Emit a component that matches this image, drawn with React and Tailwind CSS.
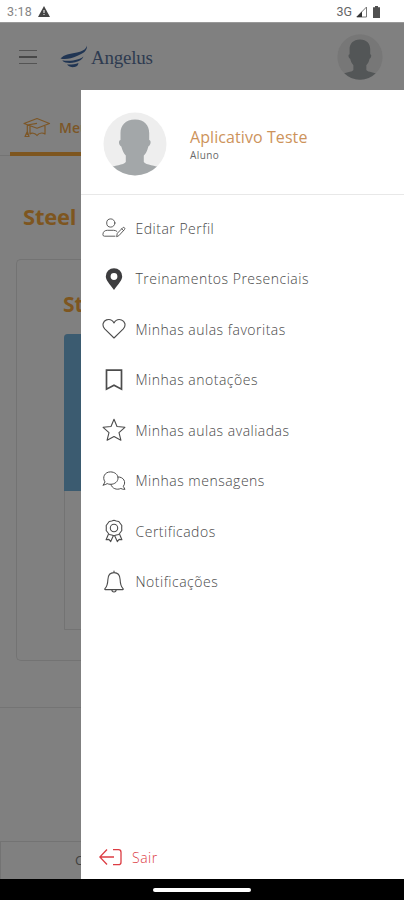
function Person({ className, bg, fg }) {
  return (
    <svg className={className} viewBox="0 0 64 64">
      <defs>
        <clipPath id="disc">
          <circle cx="32" cy="32" r="31.5" />
        </clipPath>
      </defs>
      <circle cx="32" cy="32" r="31.5" fill={bg} />
      <path
        clipPath="url(#disc)"
        fill={fg}
        d="M32 7.500c-9.500 0-14.500 6-14.500 13.500v7c-2.200.3-2 5 .8 6.500C19.500 39 21 41.500 22.800 43.500V50c-2 3.500-12 2.500-17 7v9h52v-9c-5-4.500-15-3.500-17-7v-6.500c2-2 3.500-4.500 4.500-9 2.800-1.500 3-6.200.9-6.500v-7C46.200 13.500 41.500 7.500 32 7.500z"
      />
    </svg>
  );
}

function Line({ children, width = 1.1 }) {
  return (
    <svg
      className="h-6 w-6 shrink-0"
      viewBox="0 0 24 24"
      fill="none"
      stroke="#4c4c4c"
      strokeWidth={width}
      strokeLinecap="round"
      strokeLinejoin="round"
    >
      {children}
    </svg>
  );
}

const items = [
  {
    label: "Editar Perfil",
    icon: (
      <Line width={0.9}>
        <circle cx="8.800" cy="7" r="4.100" />
        <path d="M13 20.200H2.500Q.8 20.200.9 18.500C1 15.500 3 14.300 5.500 14.300h6c1.500 0 2.500.4 3.300 1" />
        <path d="m14.700 20.300.6-3 5.500-5.600q.9-.7 1.700.1t0 1.700l-5.400 5.900zM19.700 12.800l1.700 1.700" />
      </Line>
    ),
  },
  {
    label: "Treinamentos Presenciais",
    icon: (
      <Line>
        <path
          fill="#3d3d3f"
          stroke="none"
          fillRule="evenodd"
          d="M12 1.200a8.200 8.200 0 0 0-8.200 8.200c0 3.600 3.700 7.300 8.200 13.600 4.500-6.300 8.200-10 8.200-13.600A8.200 8.200 0 0 0 12 1.200zm0 4.900a3.400 3.400 0 1 1 0 6.800 3.400 3.400 0 0 1 0-6.800z"
        />
      </Line>
    ),
  },
  {
    label: "Minhas aulas favoritas",
    icon: (
      <Line>
        <path d="M12 21 2.700 11.900C-.4 8.500 1.100 3.900 4.500 2.900 7.700 1.900 10.500 3.300 12 6c1.500-2.700 4.300-4.100 7.500-3.100 3.400 1 4.900 5.600 1.800 9z" />
      </Line>
    ),
  },
  {
    label: "Minhas anotações",
    icon: (
      <Line width={1.7}>
        <path strokeLinejoin="miter" d="M4.500 2.200h15v19L12 17.300l-7.500 3.900z" />
      </Line>
    ),
  },
  {
    label: "Minhas aulas avaliadas",
    icon: (
      <Line>
        <path d="m12 1.300 3 7.200 7.900.8-5.900 5.300 1.900 7.600-6.900-3.700-6.900 3.700L7 14.600 1.100 9.300 9 8.500z" />
      </Line>
    ),
  },
  {
    label: "Minhas mensagens",
    icon: (
      <Line width={1}>
        <path d="M1.300 16 3 12.900C-.1 8.300 2.800 2.900 8.400 2.900c4.400 0 7.600 2.700 7.600 6.200s-3.200 6.200-7.500 6.200c-1.400 0-2.300-.2-3.300-.7-1.200.9-2.600 1.400-3.900 1.400z" />
        <path d="M16 8c5.600-.4 8.500 5.200 5.300 9.300l1.700 3c-1.800.1-3-.2-4.200-.8-4 1.700-8.700.3-10-4.200" />
      </Line>
    ),
  },
  {
    label: "Certificados",
    icon: (
      <Line width={1.1}>
        <path d="m12 1.200 2.300.8 2.500.5 1.500 2 1.500 2-.1 2.500.1 2.500-1.500 2-1.500 2-2.500.5-2.300.8-2.300-.8-2.500-.5-1.500-2-1.500-2 .1-2.500-.1-2.500 1.500-2 1.500-2L9.700 2z" />
        <circle cx="12" cy="9" r="3.700" />
        <path d="m6.300 15.500-2.200 5.200 2.800-.3 1.800 2.200 2.500-5.500M17.700 15.500l2.200 5.200-2.800-.3-1.800 2.200-2.500-5.500" />
      </Line>
    ),
  },
  {
    label: "Notificações",
    icon: (
      <Line>
        <path d="M12 1v1.500M3 18.700c2.400-2.500 2.700-5 2.900-9.200C6.100 5.300 8.500 2.600 12 2.600s5.900 2.700 6.100 6.900c.2 4.200.5 6.700 2.900 9.200.5.500.3.900-.3.900H3.300c-.6 0-.8-.4-.3-.9zM9.800 19.800c.2 3 4.200 3 4.400 0" />
      </Line>
    ),
  },
];

function Label({ children, className }) {
  return <span className={"whitespace-nowrap " + className}>{children}</span>;
}

function Page() {
  return (
    <div className="h-[857px] border-t border-[#999999] bg-[#808080]">
      <header className="flex h-[66px] items-center pt-0.5">
        <div className="ml-[19px] flex w-[18px] flex-col gap-[5px]">
          <i className="h-[1.500px] bg-[#545454]" />
          <i className="h-[1.500px] bg-[#484848]" />
          <i className="h-[1.500px] bg-[#545454]" />
        </div>
        <svg className="ml-[23px] h-6 w-7" viewBox="0 0 28 24" fill="#203553">
          <path d="M27 .5c-1 4-4.500 5.800-10 7C9.500 8.800 4 9.500.5 13.500c5 1.600 11-.2 16.500-2.500C23 8.500 27.500 6 27 .5z" />
          <path d="M23.500 11.500c-2.500 2.300-6 3.200-10.500 3.900-5 .7-8.500 0-10.800 0 2.800 2.800 8 3 13 1.800 4.500-1.200 7.600-3 8.300-5.700z" />
          <path d="M18.500 18c-3.500 1.600-6.500 1.500-11.500 1.500 2 2.100 4.500 3.100 7.500 2.600 2.500-.5 3.700-2 4-4.100z" />
        </svg>
        <Label className="ml-[3px] pt-[3px] font-['Liberation_Serif',serif] text-[19px] tracking-[-0.250px] text-[#2e3b50]">
          Angelus
        </Label>
        <Person className="ml-auto mr-[21px] h-[46px] w-[46px]" bg="#777777" fg="#535657" />
      </header>

      <nav className="flex h-[67px]">
        <div className="w-[10px] border-b border-[#747474]" />
        <div className="flex flex-1 items-center border-b-4 border-[#7e561f] pl-[13px] pt-[14px] text-[#7c5626]">
          <svg
            className="h-6 w-7"
            viewBox="0 0 28 24"
            fill="none"
            stroke="currentColor"
            strokeWidth="1.200"
            strokeLinejoin="round"
          >
            <path d="M1 7.500 14 2.500l12.500 5L14 12.200zM14 7.300 4.300 9v10M4.300 15.500 2 20.500h4zM7 10v8c1.500-1.500 5-1 7 1.500 2-2.500 5.500-3 8-1.500v-8" />
          </svg>
          <Label className="ml-2 text-[14px] font-semibold">Meus cursos</Label>
        </div>
      </nav>

      <h1 className="mt-[44px] pl-[23px] text-[22px] leading-[32px] font-bold tracking-[-0.200px] text-[#7e561f]">
        Steel
      </h1>

      <section className="ml-[16px] mt-[27px] h-[402px] rounded-l-[5px] border border-r-0 border-[#737373] pl-[46px] pt-[29px]">
        <h2 className="h-[45px] text-[21px] leading-[30px] font-bold text-[#7e561f]">Steel</h2>
        <div className="ml-px h-[296px] rounded-tl-[3px] border border-[#737373]">
          <div className="-ml-px -mt-px h-[157px] rounded-tl-[4px] bg-[#3b5b70]" />
        </div>
      </section>

      <div className="mt-[46px] h-[134px] border-t border-[#747474]" />
      <footer className="flex h-[38px] items-center border-l border-t border-[#737373] pl-[74px] text-[13px] text-[#404040]">
        Cursos
      </footer>
    </div>
  );
}

function Drawer() {
  return (
    <aside className="absolute bottom-[21px] left-[81px] right-0 top-[90px] flex flex-col bg-white">
      <div className="flex h-[105px] items-center border-b border-[#e8e8e8] pl-[22px] pt-[3px]">
        <Person className="h-[64px] w-[64px]" bg="#eeeeee" fg="#a3a7a9" />
        <div className="ml-[23px] flex flex-col pt-[2px]">
          <Label className="text-[16px] leading-[20px] tracking-[0.080px] text-[#cd935b]">
            Aplicativo Teste
          </Label>
          <Label className="text-[10px] leading-[16px] tracking-[0.400px] text-[#6a6a6a]">
            Aluno
          </Label>
        </div>
      </div>
      <ul className="mt-[8px]">
        {items.map((item) => (
          <li key={item.label} className="flex h-[50.500px] items-center pl-[21px]">
            {item.icon}
            <Label className="ml-[9.500px] text-[14px] font-light tracking-[0.500px] text-[#484848]">
              {item.label}
            </Label>
          </li>
        ))}
      </ul>
      <div className="mt-auto flex h-[44px] items-center pl-[18px] text-[#dc3c43]">
        <svg
          className="h-6 w-6"
          viewBox="0 0 24 24"
          fill="none"
          stroke="currentColor"
          strokeWidth="1.300"
        >
          <path d="M8 4.500.8 12 8 19.500M.8 12H15M14 4.700h5.500q2.500 0 2.500 2.500v10q0 2.500-2.500 2.500H14" />
        </svg>
        <Label className="ml-[9px] text-[14px] font-light tracking-[0.500px]">Sair</Label>
      </div>
    </aside>
  );
}

export default function App() {
  return (
    <div className="relative flex h-[900px] w-[404px] flex-col overflow-hidden bg-black font-['Open_Sans',sans-serif]">
      <div className="flex h-[22px] shrink-0 items-center bg-white pl-[7px] pr-[24px] pt-[2px] font-[Roboto,sans-serif] text-[12.500px] text-[#858585]">
        <span className="tracking-[0.200px]">3:18</span>
        <svg className="ml-[6px] h-3 w-3" viewBox="0 0 12 12">
          <path d="M6 0 12 11H0z" fill="#444" />
          <path d="M6 4v3M6 8v1" stroke="#fff" />
        </svg>
        <span className="ml-auto text-[#666]">3G</span>
        <svg className="ml-1 h-3 w-[11px]" viewBox="0 0 11 12">
          <path d="M10.500 1v10H.8z" fill="none" stroke="#777" />
          <path d="M6 5.500V11H.5z" fill="#333" />
        </svg>
        <svg className="ml-[6px] h-3 w-[7px]" viewBox="0 0 7 12">
          <path d="M2 0h3v1.200h2V12H0V1.200h2z" fill="#505050" />
        </svg>
      </div>
      <Page />
      <div className="flex h-[21px] items-center justify-center">
        <div className="h-1 w-[98px] rounded-full bg-white" />
      </div>
      <Drawer />
    </div>
  );
}
